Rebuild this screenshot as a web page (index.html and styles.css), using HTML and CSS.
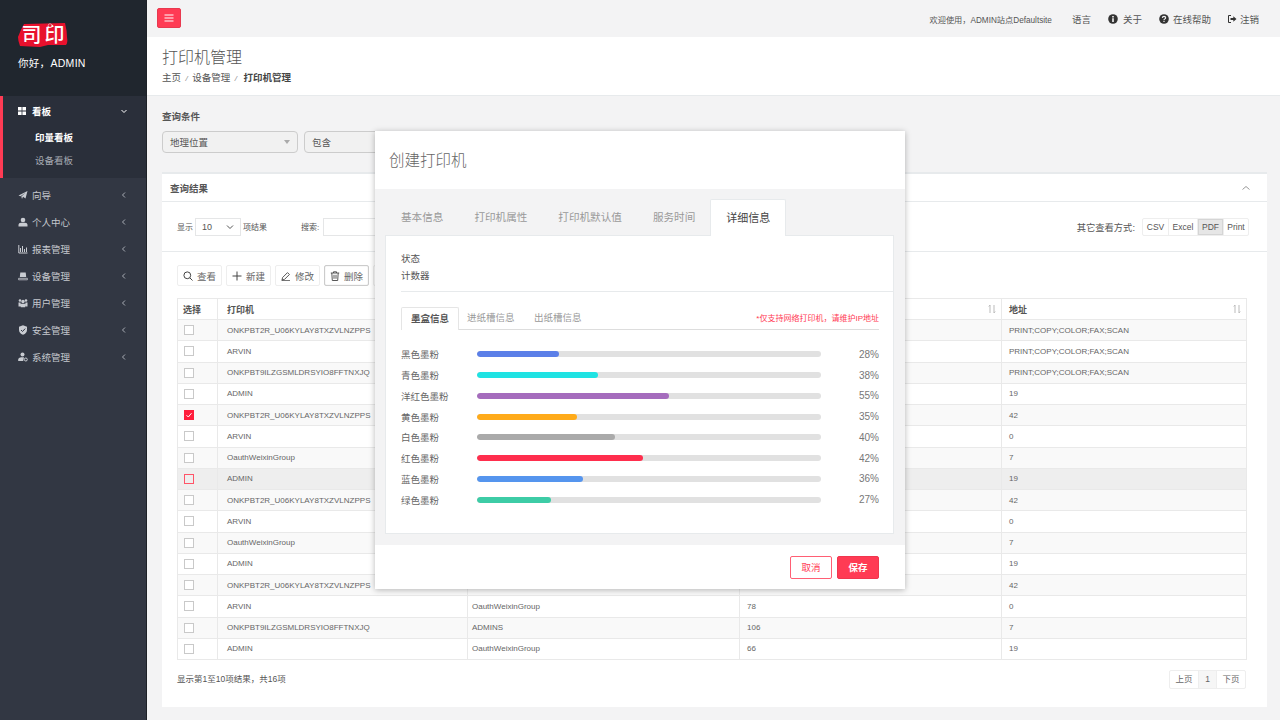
FILE: index.html
```html
<!DOCTYPE html>
<html lang="zh-CN">
<head>
<meta charset="utf-8">
<title>打印机管理</title>
<link rel="stylesheet" href="styles.css">
</head>
<body>
<div class="app">
  <aside class="sidebar">
    <div class="brand">
      <svg class="logo" width="50" height="25" viewBox="0 0 50 25">
        <path d="M6 1 L47 0 Q49 8 49 14 Q50 20 48 22 L30 22 L22 24 L2 23 Q0 18 0 14 Q3 6 6 1Z" fill="#e8112d"/>
        <text class="logo-text" x="25" y="19" text-anchor="middle" textLength="43">司印</text>
        <circle cx="32" cy="2.500" r="1.800" fill="#e8112d" stroke="#fff" stroke-width=".5"/>
      </svg>
      <div class="hello">你好，ADMIN</div>
    </div>
    <nav class="nav">
      <div class="nav-open">
        <div class="nav-item nav-item-first">
          <svg class="ni" viewBox="0 0 10 10"><path d="M1 1h3.600v3.600H1zM5.400 1H9v3.600H5.400zM1 5.400h3.600V9H1zM5.400 5.400H9V9H5.400z" fill="#fff"/></svg>
          <span class="nl nl-white">看板</span>
          <svg class="chev" viewBox="0 0 8 8"><path d="M1.500 3l2.500 2.500L6.500 3" fill="none" stroke="#fff" stroke-width="1"/></svg>
        </div>
        <div class="sub sub-on">印量看板</div>
        <div class="sub">设备看板</div>
      </div>
      <div class="nav-item">
        <svg class="ni" viewBox="0 0 10 10"><path d="M.5 5.500L9.500 1 7.500 8.500 5 6.800 4 9 3.300 6.500 7.500 2.800 2.500 6.300Z" fill="#c9ccd2"/></svg>
        <span class="nl">向导</span>
        <svg class="chev" viewBox="0 0 8 8"><path d="M5 1.500L2.500 4 5 6.500" fill="none" stroke="#a9adb5"/></svg>
      </div>
      <div class="nav-item">
        <svg class="ni" viewBox="0 0 10 10"><circle cx="5" cy="3" r="2.300" fill="#c9ccd2"/><path d="M.5 9.500V7.800Q.5 6 3 5.800H7Q9.500 6 9.500 7.800V9.500Z" fill="#c9ccd2"/></svg>
        <span class="nl">个人中心</span>
        <svg class="chev" viewBox="0 0 8 8"><path d="M5 1.500L2.500 4 5 6.500" fill="none" stroke="#a9adb5"/></svg>
      </div>
      <div class="nav-item">
        <svg class="ni" viewBox="0 0 10 10"><path d="M.8 1v8h8.700M2.500 8V4M4.500 8V2M6.500 8V5M8.500 8V3.500" fill="none" stroke="#c9ccd2"/></svg>
        <span class="nl">报表管理</span>
        <svg class="chev" viewBox="0 0 8 8"><path d="M5 1.500L2.500 4 5 6.500" fill="none" stroke="#a9adb5"/></svg>
      </div>
      <div class="nav-item">
        <svg class="ni" viewBox="0 0 10 10"><path d="M2.300 1.500h5.400L8.200 6H1.800Z" fill="#c9ccd2"/><path d="M.6 7.300h8.800v1.500H.6Z" fill="none" stroke="#c9ccd2" stroke-width=".8"/></svg>
        <span class="nl">设备管理</span>
        <svg class="chev" viewBox="0 0 8 8"><path d="M5 1.500L2.500 4 5 6.500" fill="none" stroke="#a9adb5"/></svg>
      </div>
      <div class="nav-item">
        <svg class="ni" viewBox="0 0 10 10"><circle cx="2" cy="2.500" r="1.300" fill="#c9ccd2"/><circle cx="8" cy="2.500" r="1.300" fill="#c9ccd2"/><circle cx="5" cy="3.500" r="1.700" fill="#c9ccd2"/><path d="M.5 4.500h2l.5 4H.5zM9.500 4.500h-2l-.5 4h2.500zM2.800 5.800h4.400v3.400H2.800z" fill="#c9ccd2"/></svg>
        <span class="nl">用户管理</span>
        <svg class="chev" viewBox="0 0 8 8"><path d="M5 1.500L2.500 4 5 6.500" fill="none" stroke="#a9adb5"/></svg>
      </div>
      <div class="nav-item">
        <svg class="ni" viewBox="0 0 10 10"><path d="M5 .3L9 1.800V5Q9 8.300 5 9.800 1 8.300 1 5V1.800Z" fill="#c9ccd2"/><path d="M3 5l1.500 1.500L7.200 3.600" fill="none" stroke="#323743" stroke-width="1"/></svg>
        <span class="nl">安全管理</span>
        <svg class="chev" viewBox="0 0 8 8"><path d="M5 1.500L2.500 4 5 6.500" fill="none" stroke="#a9adb5"/></svg>
      </div>
      <div class="nav-item">
        <svg class="ni" viewBox="0 0 10 10"><circle cx="4.500" cy="2.500" r="2" fill="#c9ccd2"/><path d="M.2 9V7.500Q.2 5.500 3 5.300H6L5.200 9Z" fill="#c9ccd2"/><circle cx="7.800" cy="7.500" r="1.500" fill="none" stroke="#c9ccd2"/></svg>
        <span class="nl">系统管理</span>
        <svg class="chev" viewBox="0 0 8 8"><path d="M5 1.500L2.500 4 5 6.500" fill="none" stroke="#a9adb5"/></svg>
      </div>
    </nav>
  </aside>

  <main class="main">
    <header class="topbar">
      <button class="menu-btn"><svg width="10" height="8" viewBox="0 0 10 8"><path d="M.5 1h9M.5 4h9M.5 7h9" stroke="#fff" stroke-width="1.200"/></svg></button>
      <div class="top-right">
        <span class="welcome">欢迎使用，ADMIN站点Defaultsite</span>
        <span class="top-link">语言</span>
        <span class="top-link"><svg class="ti" viewBox="0 0 10 10"><circle cx="5" cy="5" r="4.800" fill="#333"/><path d="M4.200 2h1.600v1.400H4.200zM4.200 4.300h1.600V8H4.200z" fill="#f3f3f4"/></svg>关于</span>
        <span class="top-link"><svg class="ti ti-help" viewBox="0 0 10 10"><circle cx="5" cy="5" r="4.800" fill="#333"/><path d="M3.300 3.900Q3.400 2.400 5 2.400 6.700 2.500 6.700 3.700 6.700 4.600 5.700 5.100 5 5.500 5 6.100" fill="none" stroke="#f3f3f4" stroke-width="1.100"/><path d="M4.400 6.800h1.200V8H4.400z" fill="#f3f3f4"/></svg>在线帮助</span>
        <span class="top-link top-out"><svg class="ti ti-out" viewBox="0 0 10 10"><path d="M4 1.500H1.500v7H4" fill="none" stroke="#333"/><path d="M3.500 4h2.800V2.300L9.500 5 6.300 7.700V6H3.500z" fill="#333"/></svg>注销</span>
      </div>
    </header>

    <section class="heading">
      <h1 class="title">打印机管理</h1>
      <div class="crumbs"><span>主页</span><i>/</i><span>设备管理</span><i>/</i><b>打印机管理</b></div>
    </section>

    <section class="content">
      <div class="q-label">查询条件</div>
      <div class="q-row">
        <div class="q-select q-select-a"><span>地理位置</span><s class="tri"></s></div>
        <div class="q-select q-select-b"><span>包含</span></div>
      </div>

      <div class="panel">
        <div class="panel-head"><span>查询结果</span>
          <svg width="10" height="8" viewBox="0 0 10 8"><path d="M1.500 5.500L5 2.500l3.500 3" fill="none" stroke="#999"/></svg>
        </div>
        <div class="panel-tools">
          <div class="length"><span>显示</span>
            <div class="len-box"><span>10</span><svg width="8" height="6" viewBox="0 0 8 6"><path d="M1 1.500L4 4.500 7 1.500" fill="none" stroke="#555"/></svg></div>
            <span>项结果</span>
          </div>
          <div class="search"><span>搜索:</span><div class="search-box"></div></div>
          <div class="exports"><span class="ex-label">其它查看方式:</span>
            <div class="ex-group"><span>CSV</span><span class="ex-wide">Excel</span><span class="ex-on">PDF</span><span>Print</span></div>
          </div>
        </div>
        <div class="panel-body">
          <div class="actions">
            <button class="act"><svg viewBox="0 0 10 10"><circle cx="4.300" cy="4.300" r="3.400" fill="none" stroke="#444"/><path d="M6.800 6.800L9.500 9.500" stroke="#444"/></svg>查看</button>
            <button class="act"><svg viewBox="0 0 10 10"><path d="M5 .5v9M.5 5h9" stroke="#444"/></svg>新建</button>
            <button class="act"><svg viewBox="0 0 10 10"><path d="M1 9l.6-2.500L6.500 1.600l1.900 1.900-4.900 4.900zM.5 9.700H9" fill="none" stroke="#444" stroke-width=".9"/></svg>修改</button>
            <button class="act act-on"><svg viewBox="0 0 10 10"><path d="M.8 2h8.400M3.500 2V.8h3V2M1.800 2l.5 7.500h5.400L8.200 2M4 3.800v4M6 3.800v4" fill="none" stroke="#444" stroke-width=".9"/></svg>删除</button>
            <button class="act"></button>
          </div>

          <table class="grid">
            <colgroup><col class="c1"><col class="c2"><col class="c3"><col class="c4"><col class="c5"></colgroup>
            <thead>
              <tr><th>选择</th><th>打印机</th><th>打印机组</th>
                <th class="sorted">页数<svg class="sort" viewBox="0 0 8 10"><path d="M2 9V1L.8 2.500M6 1v8l1.200-1.500" fill="none" stroke="#bbb"/></svg></th>
                <th class="sorted">地址<svg class="sort" viewBox="0 0 8 10"><path d="M2 9V1L.8 2.500M6 1v8l1.200-1.500" fill="none" stroke="#bbb"/></svg></th></tr>
            </thead>
            <tbody>
              <tr><td><s class="cb"></s></td><td>ONKPBT2R_U06KYLAY8TXZVLNZPPS</td><td>ADMINS</td><td>42</td><td>PRINT;COPY;COLOR;FAX;SCAN</td></tr>
              <tr><td><s class="cb"></s></td><td>ARVIN</td><td>OauthWeixinGroup</td><td>78</td><td>PRINT;COPY;COLOR;FAX;SCAN</td></tr>
              <tr><td><s class="cb"></s></td><td>ONKPBT9ILZGSMLDRSYIO8FFTNXJQ</td><td>ADMINS</td><td>106</td><td>PRINT;COPY;COLOR;FAX;SCAN</td></tr>
              <tr><td><s class="cb"></s></td><td>ADMIN</td><td>OauthWeixinGroup</td><td>66</td><td>19</td></tr>
              <tr><td><s class="cb cb-on"><svg viewBox="0 0 10 10"><path d="M2.500 5.200L4.300 7l3.200-3.800" fill="none" stroke="#fff"/></svg></s></td><td>ONKPBT2R_U06KYLAY8TXZVLNZPPS</td><td>ADMINS</td><td>42</td><td>42</td></tr>
              <tr><td><s class="cb"></s></td><td>ARVIN</td><td>OauthWeixinGroup</td><td>78</td><td>0</td></tr>
              <tr><td><s class="cb"></s></td><td>OauthWeixinGroup</td><td>ADMINS</td><td>106</td><td>7</td></tr>
              <tr class="hover"><td><s class="cb cb-red"></s></td><td>ADMIN</td><td>OauthWeixinGroup</td><td>66</td><td>19</td></tr>
              <tr><td><s class="cb"></s></td><td>ONKPBT2R_U06KYLAY8TXZVLNZPPS</td><td>ADMINS</td><td>42</td><td>42</td></tr>
              <tr><td><s class="cb"></s></td><td>ARVIN</td><td>OauthWeixinGroup</td><td>78</td><td>0</td></tr>
              <tr><td><s class="cb"></s></td><td>OauthWeixinGroup</td><td>ADMINS</td><td>106</td><td>7</td></tr>
              <tr><td><s class="cb"></s></td><td>ADMIN</td><td>OauthWeixinGroup</td><td>66</td><td>19</td></tr>
              <tr><td><s class="cb"></s></td><td>ONKPBT2R_U06KYLAY8TXZVLNZPPS</td><td>ADMINS</td><td>42</td><td>42</td></tr>
              <tr><td><s class="cb"></s></td><td>ARVIN</td><td>OauthWeixinGroup</td><td>78</td><td>0</td></tr>
              <tr><td><s class="cb"></s></td><td>ONKPBT9ILZGSMLDRSYIO8FFTNXJQ</td><td>ADMINS</td><td>106</td><td>7</td></tr>
              <tr><td><s class="cb"></s></td><td>ADMIN</td><td>OauthWeixinGroup</td><td>66</td><td>19</td></tr>
            </tbody>
          </table>

          <div class="foot">
            <span>显示第1至10项结果，共16项</span>
            <div class="pager"><span>上页</span><span class="pg-on">1</span><span>下页</span></div>
          </div>
        </div>
      </div>
    </section>
  </main>

  <div class="modal">
    <div class="m-head">创建打印机</div>
    <div class="m-body">
      <div class="m-tabs">
        <span class="m-tab">基本信息</span>
        <span class="m-tab">打印机属性</span>
        <span class="m-tab">打印机默认值</span>
        <span class="m-tab">服务时间</span>
        <span class="m-tab m-tab-on">详细信息</span>
      </div>
      <div class="m-pane">
        <div class="m-info">
          <div>状态</div>
          <div>计数器</div>
        </div>
        <div class="subtabs">
          <span class="st st-on">墨盒信息</span>
          <span class="st">进纸槽信息</span>
          <span class="st">出纸槽信息</span>
          <span class="note">*仅支持网络打印机，请维护IP地址</span>
        </div>
        <div class="bars">
          <div class="bar-row"><span class="bl">黑色墨粉</span><div class="track"><div class="fill" style="width:23.8%;background:#5b7fe8"></div></div><span class="bp">28%</span></div>
          <div class="bar-row"><span class="bl">青色墨粉</span><div class="track"><div class="fill" style="width:35.2%;background:#1fe3e3"></div></div><span class="bp">38%</span></div>
          <div class="bar-row"><span class="bl">洋红色墨粉</span><div class="track"><div class="fill" style="width:55.8%;background:#a56cbd"></div></div><span class="bp">55%</span></div>
          <div class="bar-row"><span class="bl">黄色墨粉</span><div class="track"><div class="fill" style="width:29.1%;background:#ffab1a"></div></div><span class="bp">35%</span></div>
          <div class="bar-row"><span class="bl">白色墨粉</span><div class="track"><div class="fill" style="width:40.1%;background:#aaaaaa"></div></div><span class="bp">40%</span></div>
          <div class="bar-row"><span class="bl">红色墨粉</span><div class="track"><div class="fill" style="width:48.3%;background:#ff2e4d"></div></div><span class="bp">42%</span></div>
          <div class="bar-row"><span class="bl">蓝色墨粉</span><div class="track"><div class="fill" style="width:30.8%;background:#5595ee"></div></div><span class="bp">36%</span></div>
          <div class="bar-row"><span class="bl">绿色墨粉</span><div class="track"><div class="fill" style="width:21.5%;background:#3dcca6"></div></div><span class="bp">27%</span></div>
        </div>
      </div>
    </div>
    <div class="m-foot">
      <button class="btn-line">取消</button>
      <button class="btn-fill">保存</button>
    </div>
  </div>
</div>
</body>
</html>
```

FILE: styles.css
```css
* { box-sizing: border-box; }
html, body { margin: 0; padding: 0; }
body {
  font-family: "Liberation Sans", "Noto Sans CJK SC", sans-serif;
  font-size: 9.500px;
  color: #555;
}
button { font-family: inherit; cursor: pointer; }
s { text-decoration: none; }

.app { position: relative; display: flex; width: 1280px; height: 720px; overflow: hidden; background: #f3f3f4; }

/* sidebar */
.sidebar { flex: 0 0 147px; background: #323743; border-right: 1px solid #1d2127; display: flex; flex-direction: column; }
.brand { height: 96px; background: #20262e; padding: 23px 0 0 18px; }
.logo { display: block; overflow: visible; }
.logo-text { font-family: "Noto Sans CJK SC", sans-serif; font-size: 20px; font-weight: 500; fill: #fff; }
.hello { margin-top: 7px; font-size: 10.500px; line-height: 16px; color: #fff; letter-spacing: .3px; }
.nav-open { height: 82px; background: #2a2f3a; border-left: 3px solid #ff3b54; padding-top: 5px; margin-bottom: 3px; }
.nav-item { display: flex; align-items: center; height: 27px; padding: 0 18px 0 18px; }
.nav-item-first { padding-left: 14px; height: 20px; margin-bottom: 7px; }
.ni { width: 10px; height: 10px; flex: none; }
.nl { margin-left: 4px; flex: 1; font-size: 9.500px; color: #c5c8ce; }
.nl-white { margin-left: 5px; color: #fff; font-weight: 700; }
.chev { width: 8px; height: 8px; flex: none; }
.sub { height: 23px; line-height: 20px; padding-left: 32px; font-size: 9.500px; color: #a7abb3; }
.sub-on { color: #fff; font-weight: 700; }

/* main */
.main { flex: 1; min-width: 0; display: flex; flex-direction: column; }
.topbar { height: 37px; padding: 0 21px 0 10px; display: flex; align-items: center; justify-content: space-between; background: #f3f3f4; }
.menu-btn { width: 24px; height: 20px; margin-top: -1px; padding: 0; border: 1px solid #e8394f; border-radius: 2px; background: #ff3b54; display: flex; align-items: center; justify-content: center; }
.top-right { display: flex; align-items: center; gap: 17px; }
.welcome { font-size: 8.200px; color: #555; margin-right: 3px; }
.top-link { display: inline-flex; align-items: center; font-size: 9.500px; color: #555; }
.top-out { margin-left: -1px; }
.ti { width: 10px; height: 10px; margin-right: 5px; }
.ti-help { margin-right: 4px; }
.ti-out { margin-right: 3px; }

.heading { height: 59px; background: #fff; border-bottom: 1px solid #e7eaec; padding: 11px 15px 0; }
.title { margin: 0; font-size: 16px; font-weight: 300; line-height: 20px; color: #555; }
.crumbs { margin-top: 3px; font-size: 9.500px; line-height: 14px; color: #555; }
.crumbs i { margin: 0 4.500px; font-size: 8px; color: #888; }
.crumbs b { margin-left: 2px; color: #444; }

.content { flex: 1; padding: 14px 13px 13px 15px; display: flex; flex-direction: column; }
.q-label { font-size: 9.500px; font-weight: 700; line-height: 14px; color: #555; }
.q-row { display: flex; gap: 6px; margin-top: 7px; }
.q-select { height: 22px; padding: 0 7px; display: flex; align-items: center; justify-content: space-between; border: 1px solid #ccc; border-radius: 4px; background: #f1f1f1; color: #555; }
.q-select-a { width: 136px; }
.q-select-b { width: 120px; }
.tri { width: 0; height: 0; border: 3.500px solid transparent; border-top: 4px solid #aaa; border-bottom: 0; }

.panel { flex: 1; margin-top: 19px; background: #fff; border-top: 2px solid #e7eaec; display: flex; flex-direction: column; }
.panel-head { height: 28px; padding: 0 16px 0 8px; display: flex; align-items: center; justify-content: space-between; border-bottom: 1px solid #e7eaec; font-weight: 700; color: #555; }
.panel-tools { height: 50px; padding: 0 18px 0 15px; display: flex; align-items: center; border-bottom: 1px solid #e7eaec; font-size: 8px; }
.length { display: flex; align-items: center; gap: 2px; }
.len-box { width: 46px; height: 18px; padding: 0 6px; display: flex; align-items: center; justify-content: space-between; border: 1px solid #e5e6e7; font-size: 9px; }
.search { display: flex; align-items: center; gap: 4px; margin-left: 34px; }
.search-box { width: 60px; height: 18px; border: 1px solid #e5e6e7; }
.exports { margin-left: auto; display: flex; align-items: center; gap: 7px; }
.ex-label { font-size: 9.300px; color: #555; }
.ex-group { display: flex; height: 18px; border: 1px solid #eee; border-radius: 2px; font-size: 8.500px; }
.ex-group span { width: 26px; text-align: center; line-height: 16px; border-right: 1px solid #eee; }
.ex-group .ex-wide { width: 29px; }
.ex-group span:last-child { width: 24px; border-right: 0; }
.ex-group .ex-on { background: #e6e6e6; box-shadow: inset 0 0 0 1px #d5d5d5; }

.panel-body { flex: 1; padding: 13px 21px 0 15px; }
.actions { display: flex; gap: 4px; height: 21px; }
.act { width: 45px; height: 21px; padding: 0; display: inline-flex; align-items: center; justify-content: center; gap: 4px; border: 1px solid #eee; border-radius: 2px; background: #fff; color: #666; font-size: 9.500px; }
.act svg { width: 10px; height: 10px; }
.act-on { border-color: #ccc; box-shadow: inset 0 0 1px #bbb; }

.grid { width: 1069px; margin-top: 12px; border-collapse: collapse; table-layout: fixed; font-size: 8px; color: #666; }
.c1 { width: 40px; }
.c2 { width: 250px; }
.c3 { width: 272px; }
.c4 { width: 262px; }
.c5 { width: 245px; }
.grid th, .grid td { border: 1px solid #e9e9e9; padding: 0 5px 0 9px; white-space: nowrap; overflow: hidden; text-align: left; }
.grid th { height: 21px; font-size: 9px; font-weight: 700; color: #555; position: relative; }
.grid th:first-child { padding-left: 5px; }
.grid td { height: 21.250px; }
.grid td:nth-child(3) { padding-left: 4px; }
.grid td:nth-child(n+4) { padding-left: 7px; }
.grid th:nth-child(n+3) { padding-left: 7px; }
.grid tbody tr:nth-child(odd) { background: #f9f9f9; }
.grid tbody tr.hover { background: #eeeeee; }
.sort { position: absolute; right: 5px; top: 5px; width: 8px; height: 10px; }
.cb { display: block; width: 10px; height: 10px; margin-left: -3px; background: #fff; border: 1px solid #c9c9c9; }
.cb svg { display: block; width: 10px; height: 10px; margin: -1px; }
.cb-on { background: #ff1f3d; border-color: #ff1f3d; }
.cb-red { background: transparent; border-color: #ff5468; }

.foot { margin-top: 10px; display: flex; align-items: flex-start; justify-content: space-between; width: 1069px; font-size: 8.500px; color: #555; }
.foot > span { line-height: 18px; }
.pager { display: flex; height: 19px; border: 1px solid #eee; border-radius: 2px; font-size: 8.500px; color: #666; }
.pager span { width: 28px; line-height: 17px; text-align: center; }
.pager .pg-on { width: 19px; background: #f6f6f6; border-left: 1px solid #eee; border-right: 1px solid #eee; }

/* modal */
.modal { position: absolute; left: 375px; top: 131px; width: 530px; height: 458px; background: #fff; box-shadow: 0 1px 6px rgba(0,0,0,.28); display: flex; flex-direction: column; }
.m-head { height: 58px; padding: 0 14px 2px; display: flex; align-items: center; font-size: 15.500px; font-weight: 300; color: #666; }
.m-body { height: 356px; background: #f3f3f4; padding: 10px 11px 11px 10px; display: flex; flex-direction: column; }
.m-tabs { height: 36px; display: flex; align-items: flex-end; }
.m-tab { padding: 0 15.500px; line-height: 36px; font-size: 10.600px; color: #999; }
.m-tab:first-child { margin-left: .5px; }
.m-tab-on { height: 37px; margin-left: -.5px; margin-bottom: -1px; position: relative; z-index: 1; padding: 0 15px; background: #fff; border: 1px solid #e7eaec; border-bottom: 0; border-radius: 2px 2px 0 0; font-size: 11px; color: #444; }
.m-pane { flex: 1; background: #fff; border: 1px solid #e7eaec; padding: 0 0 0 15px; }
.m-info { height: 56px; padding-top: 14px; border-bottom: 1px solid #e7eaec; font-size: 9.500px; line-height: 17px; color: #555; }
.subtabs { position: relative; margin: 15px 14px 0 0; height: 23px; display: flex; align-items: flex-end; border-bottom: 1px solid #ddd; font-size: 9.500px; color: #999; }
.st { margin-right: 19.500px; line-height: 22px; }
.st-on { margin: 0 8px -1px 0; padding: 0 9px; height: 23px; background: #fff; border: 1px solid #e5e5e5; border-bottom: 0; border-radius: 2px 2px 0 0; font-weight: 700; color: #555; }
.note { margin-left: auto; line-height: 20px; font-size: 8px; color: #ff3b54; }
.bars { margin: 14px 14px 0 0; }
.bar-row { height: 20.750px; display: flex; align-items: center; }
.bl { width: 76px; flex: none; font-size: 9.500px; color: #666; }
.track { width: 344px; height: 6px; flex: none; border-radius: 3px; background: #e1e1e1; overflow: hidden; }
.fill { height: 100%; border-radius: 3px; }
.bp { margin-left: auto; font-size: 10px; color: #777; }
.m-foot { flex: 1; padding-right: 26px; display: flex; align-items: center; justify-content: flex-end; gap: 5px; }
.btn-line, .btn-fill { width: 42px; height: 23px; padding: 0; border-radius: 2px; font-size: 9.500px; }
.btn-line { background: #fff; border: 1px solid #ff5f74; color: #ff3b54; }
.btn-fill { background: #ff3b54; border: 1px solid #f0364e; color: #fff; font-weight: 700; }
```
